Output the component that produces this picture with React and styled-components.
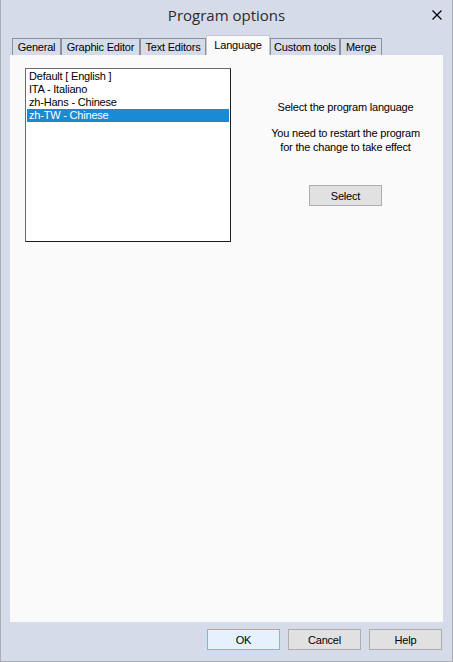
import styled, { createGlobalStyle } from 'styled-components';

const GlobalStyle = createGlobalStyle`
    html, body {
        margin: 0;
        padding: 0;
        background: #d6dbe9;
    }
`;

const Window = styled.div`
    box-sizing: border-box;
    width: 453px;
    height: 662px;
    border: 1px solid #a9acb2;
    border-top: none;
    background: #d6dbe9;
    display: flex;
    flex-direction: column;
    font-family: "Liberation Sans", Arial, sans-serif;
    font-size: 11px;
    letter-spacing: -0.2px;
    color: #000;
`;

const TitleBar = styled.div`
    height: 35px;
    display: grid;
    grid-template-columns: 1fr auto 1fr;
    align-items: start;
`;

const Title = styled.div`
    grid-column: 2;
    padding-top: 5px;
    font-family: "Open Sans", "Noto Sans", sans-serif;
    font-size: 15px;
    line-height: 21px;
    letter-spacing: 0;
    color: #2b2b2b;
`;

const CloseBtn = styled.div`
    justify-self: end;
    margin: 10px 10px 0 0;
    width: 10px;
    height: 10px;
    display: flex;
`;

const TabStrip = styled.div`
    height: 20px;
    display: flex;
    align-items: flex-end;
    padding-left: 11px;
`;

const Tab = styled.div`
    box-sizing: border-box;
    width: ${(p) => p.$w}px;
    height: ${(p) => (p.$active ? 20 : 17)}px;
    display: flex;
    align-items: center;
    justify-content: center;
    white-space: nowrap;
    border: 1px solid ${(p) => (p.$active ? '#c6c9ce' : '#8d9099')};
    border-bottom: none;
    background: ${(p) => (p.$active ? '#fafafa' : '#d6dbe9')};
    padding-bottom: ${(p) => (p.$active ? 2 : 0)}px;
`;

const Panel = styled.div`
    height: 567px;
    margin: 0 9px;
    background: #fafafa;
    display: flex;
    align-items: flex-start;
    padding: 13px 0 0 15px;
    box-sizing: border-box;
`;

const ListBox = styled.div`
    box-sizing: border-box;
    width: 206px;
    height: 174px;
    background: #fff;
    border: 1px solid #1e1e1e;
    border-top-color: #6a6a6a;
    border-left-color: #6a6a6a;
    padding: 1px;
    display: flex;
    flex-direction: column;
`;

const ListItem = styled.div`
    height: 13px;
    line-height: 13px;
    padding-left: 2px;
    white-space: nowrap;
    background: ${(p) => (p.$selected ? '#1a8ad4' : 'transparent')};
    color: ${(p) => (p.$selected ? '#fff' : '#000')};
`;

const Side = styled.div`
    width: 195px;
    margin-left: 17px;
    padding-top: 32px;
    display: flex;
    flex-direction: column;
    align-items: center;
    text-align: center;
    line-height: 14px;
`;

const Note = styled.div`
    margin-top: ${(p) => p.$gap || 0}px;
`;

const Button = styled.button`
    box-sizing: border-box;
    width: 73px;
    height: 21px;
    padding: 0;
    font-family: "Liberation Sans", Arial, sans-serif;
    font-size: 11px;
    letter-spacing: -0.2px;
    color: #000;
    background: ${(p) => (p.$default ? '#e5f1fb' : '#e1e1e1')};
    border: 1px solid ${(p) => (p.$default ? '#7eb4ea' : '#adadad')};
    margin-top: ${(p) => p.$gap || 0}px;
`;

const Footer = styled.div`
    display: flex;
    justify-content: flex-end;
    gap: 8px;
    padding: 7px 10px 0 0;
`;

const tabs = [
    { label: 'General', w: 49 },
    { label: 'Graphic Editor', w: 79 },
    { label: 'Text Editors', w: 66 },
    { label: 'Language', w: 64, active: true },
    { label: 'Custom tools', w: 70 },
    { label: 'Merge', w: 42 },
];

const languages = [
    'Default [ English ]',
    'ITA - Italiano',
    'zh-Hans - Chinese',
    'zh-TW - Chinese',
];

export default function App() {
    return (
        <>
            <GlobalStyle />
            <Window>
                <TitleBar>
                    <Title>Program options</Title>
                    <CloseBtn>
                        <svg width="10" height="10" viewBox="0 0 10 10">
                            <path d="M0.5 0.5 L9.5 9.5 M9.5 0.5 L0.5 9.5" stroke="#000" strokeWidth="1.2" />
                        </svg>
                    </CloseBtn>
                </TitleBar>

                <TabStrip>
                    {tabs.map((t) => (
                        <Tab key={t.label} $w={t.w} $active={t.active}>{t.label}</Tab>
                    ))}
                </TabStrip>

                <Panel>
                    <ListBox>
                        {languages.map((l, i) => (
                            <ListItem key={l} $selected={i === 3}>{l}</ListItem>
                        ))}
                    </ListBox>

                    <Side>
                        <Note>Select the program language</Note>
                        <Note $gap={12}>You need to restart the program<br />for the change to take effect</Note>
                        <Button $gap={31}>Select</Button>
                    </Side>
                </Panel>

                <Footer>
                    <Button $default>OK</Button>
                    <Button>Cancel</Button>
                    <Button>Help</Button>
                </Footer>
            </Window>
        </>
    );
}
